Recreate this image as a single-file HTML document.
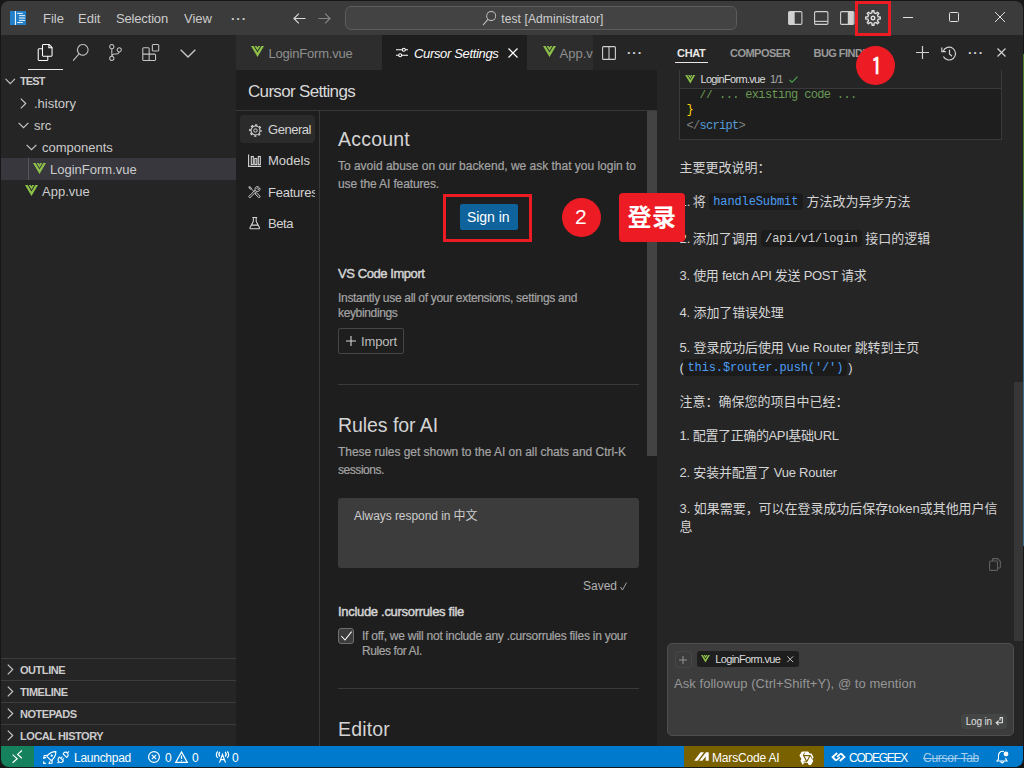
<!DOCTYPE html>
<html lang="en">
<head>
<meta charset="utf-8">
<title>Cursor Settings</title>
<style>
*{box-sizing:border-box;margin:0;padding:0}
html,body{width:1024px;height:768px;overflow:hidden;background:#1e1e1e}
body{font-family:"Liberation Sans","Noto Sans CJK SC",sans-serif;font-size:13px;color:#ccc;position:relative}
.abs{position:absolute}
.t{position:absolute;white-space:nowrap;line-height:1}
svg{position:absolute;overflow:visible}
#titlebar{left:0;top:0;width:1024px;height:35px;background:#3b3b3b}
#sidebar{left:0;top:35px;width:236px;height:711px;background:#252526}
#status{left:0;top:746px;width:1024px;height:22px;background:#007acc;color:#fff}
#tabs{left:236px;top:35px;width:421px;height:35px;background:#252526}
#editor{left:236px;top:70px;width:421px;height:676px;background:#1e1e1e}
#chat{left:657px;top:35px;width:367px;height:711px;background:#252526}
.menu{top:12px;font-size:13px;color:#ccc}
.row{position:absolute;left:0;width:236px;height:22px}
.pane{position:absolute;left:0;width:236px;height:22px;border-top:1px solid #3c3c3c}
.pane .t{left:20px;top:6px;font-size:11px;font-weight:bold;color:#ccc;letter-spacing:-0.45px}
.tree{font-size:13px;color:#ccc;top:5px}
.desc{font-size:12px;color:#a4a4a4;margin-top:0.7px;-webkit-text-stroke:0.2px #a4a4a4}
.h2{font-size:19.5px;color:#d4d4d4;margin-top:0.5px}
.h3{font-size:13px;font-weight:normal;-webkit-text-stroke:0.45px #d4d4d4;color:#d4d4d4}
.nav{font-size:13px;color:#d4d4d4;left:32px;margin-top:1.2px}
.cj{font-size:13px;color:#d4d4d4}
.mono{font-family:"Liberation Mono","DejaVu Sans Mono",monospace}
.code{font-family:"Liberation Mono","DejaVu Sans Mono",monospace;font-size:12px}
.ic{background:#1b1b1b;border-radius:3px;padding:2px 4px;font-family:"Liberation Mono","DejaVu Sans Mono",monospace;font-size:12px}
</style>
</head>
<body>

<!-- ================= TITLE BAR ================= -->
<div id="titlebar" class="abs">
  <svg style="left:10px;top:11px" width="16" height="14" viewBox="0 0 16 14">
    <rect x="0" y="0" width="16" height="14" fill="#2380c8"/>
    <rect x="4.900" y="0" width="1" height="14" fill="#fff"/>
    <rect x="7.200" y="1.900" width="5.600" height="0.900" fill="#fff"/>
    <rect x="9" y="4.100" width="6" height="1" fill="#e4eff8"/>
    <rect x="9" y="6" width="6" height="2" fill="#8fbde2"/>
    <rect x="9" y="8.900" width="6" height="1" fill="#e4eff8"/>
    <rect x="7.200" y="11.100" width="5.600" height="0.900" fill="#fff"/>
  </svg>
  <span class="t menu" style="left:43px">File</span>
  <span class="t menu" style="left:78px">Edit</span>
  <span class="t menu" style="left:116px;letter-spacing:-0.165px">Selection</span>
  <span class="t menu" style="left:184px">View</span>
  <span class="t menu" style="left:231px;letter-spacing:1px;font-weight:bold">···</span>
  <!-- nav arrows -->
  <svg style="left:292.500px;top:12.500px" width="13" height="11" viewBox="0 0 13 11" fill="none" stroke="#d8d8d8" stroke-width="1.200"><path d="M12.500 5.500 H1 M5.800 0.700 L1 5.500 L5.800 10.300"/></svg>
  <svg style="left:318px;top:12.500px" width="13" height="11" viewBox="0 0 13 11" fill="none" stroke="#858585" stroke-width="1.200"><path d="M0.500 5.500 H12 M7.200 0.700 L12 5.500 L7.200 10.300"/></svg>
  <!-- command center -->
  <div class="abs" style="left:345px;top:6px;width:392px;height:24px;background:#434343;border:1px solid #5c5c5c;border-radius:6px"></div>
  <svg style="left:482px;top:10.500px" width="14.500" height="14.500" viewBox="0 0 24 24" fill="#c8c8c8"><path d="M15.250 0a8.250 8.250 0 0 0-6.180 13.720L1 22.880l1.120 1 8.050-9.120A8.251 8.251 0 1 0 15.250.010V0zm0 15a6.750 6.750 0 1 1 0-13.500 6.750 6.750 0 0 1 0 13.500z"/></svg>
  <span class="t" style="left:501.250px;top:12.700px;font-size:12px;color:#d0d0d0;letter-spacing:0.111px">test [Administrator]</span>
  <!-- layout icons -->
  <svg style="left:788px;top:10.500px" width="14.500" height="14" viewBox="0 0 14.500 14" fill="none" stroke="#d0d0d0" stroke-width="1.100"><rect x="0.600" y="0.600" width="13.300" height="12.800" rx="1.200"/><rect x="1" y="1" width="5.700" height="12" fill="#d0d0d0" stroke="none"/></svg>
  <svg style="left:813.500px;top:10.500px" width="14.500" height="14" viewBox="0 0 14.500 14" fill="none" stroke="#d0d0d0" stroke-width="1.100"><rect x="0.600" y="0.600" width="13.300" height="12.800" rx="1.200"/><path d="M0.600 10.400 H13.900"/></svg>
  <svg style="left:839.500px;top:10.500px" width="14.500" height="14" viewBox="0 0 14.500 14" fill="none" stroke="#d0d0d0" stroke-width="1.100"><rect x="0.600" y="0.600" width="13.300" height="12.800" rx="1.200"/><rect x="7.800" y="1" width="5.700" height="12" fill="#d0d0d0" stroke="none"/></svg>
  <!-- gear -->
  <svg style="left:865px;top:10px" width="16" height="16" viewBox="0 0 16 16" fill="none" stroke="#e0e0e0" stroke-width="1.400" stroke-linejoin="round"><circle cx="8" cy="8" r="1.800"/><path d="M6.92 2.81 L7.04 0.76 L8.96 0.76 L9.08 2.81 L10.90 3.56 L12.44 2.20 L13.80 3.56 L12.44 5.10 L13.19 6.92 L15.24 7.04 L15.24 8.96 L13.19 9.08 L12.44 10.90 L13.80 12.44 L12.44 13.80 L10.90 12.44 L9.08 13.19 L8.96 15.24 L7.04 15.24 L6.92 13.19 L5.10 12.44 L3.56 13.80 L2.20 12.44 L3.56 10.90 L2.81 9.08 L0.76 8.96 L0.76 7.04 L2.81 6.92 L3.56 5.10 L2.20 3.56 L3.56 2.20 L5.10 3.56Z"/></svg>
  <!-- window controls -->
  <div class="abs" style="left:903px;top:17px;width:10px;height:1px;background:#e0e0e0"></div>
  <div class="abs" style="left:949px;top:12px;width:10px;height:10px;border:1px solid #e0e0e0;border-radius:1.500px"></div>
  <svg style="left:995px;top:12px" width="10" height="10" viewBox="0 0 10 10" stroke="#e0e0e0" stroke-width="1"><path d="M0 0 L10 10 M10 0 L0 10"/></svg>
</div>

<!-- ================= SIDEBAR ================= -->
<div id="sidebar" class="abs">
  <!-- activity icons (horizontal) -->
  <svg style="left:37px;top:9px" width="17" height="17" viewBox="0 0 24 24" fill="#fff"><path d="M17.5 0h-9L7 1.5V6H2.5L1 7.5v15.07L2.5 24h12.07L16 22.57V18h4.7l1.3-1.43V4.5L17.5 0zm0 2.12l2.38 2.38H17.5V2.12zm-3 20.38h-12v-15H7v9.07L8.5 18h6v4.5zm6-6h-12v-15H16V6h4.5v10.5z"/></svg>
  <svg style="left:72px;top:9px" width="17" height="17" viewBox="0 0 24 24" fill="#c5c5c5"><path d="M15.25 0a8.25 8.25 0 0 0-6.18 13.72L1 22.88l1.12 1 8.05-9.12A8.251 8.251 0 1 0 15.25.01V0zm0 15a6.75 6.75 0 1 1 0-13.5 6.75 6.75 0 0 1 0 13.5z"/></svg>
  <svg style="left:107px;top:9px" width="17" height="17" viewBox="0 0 24 24" fill="#c5c5c5"><path d="M21.007 8.222A3.738 3.738 0 0 0 15.045 5.2a3.737 3.737 0 0 0 1.156 6.583 2.988 2.988 0 0 1-2.668 1.67h-2.99a4.456 4.456 0 0 0-2.989 1.165V7.4a3.737 3.737 0 1 0-1.494 0v9.117a3.776 3.776 0 1 0 1.816.099 2.99 2.99 0 0 1 2.668-1.667h2.99a4.484 4.484 0 0 0 4.223-3.039 3.736 3.736 0 0 0 3.25-3.687zM4.565 3.738a2.242 2.242 0 1 1 4.484 0 2.242 2.242 0 0 1-4.484 0zm4.484 16.441a2.242 2.242 0 1 1-4.484 0 2.242 2.242 0 0 1 4.484 0zm8.221-9.715a2.242 2.242 0 1 1 0-4.485 2.242 2.242 0 0 1 0 4.485z"/></svg>
  <svg style="left:142px;top:9px" width="17.500" height="17" viewBox="0 0 24 24" fill="#c5c5c5"><path d="M13.5 1.5L15 0h7.5L24 1.5V9l-1.5 1.5H15L13.5 9V1.5zm1.500 0V9h7.500V1.500H15zM0 15V6l1.500-1.500H9L10.500 6v7.500H18l1.500 1.500v7.500L18 24H1.500L0 22.500V15zm9-1.500V6H1.500v7.500H9zM9 15H1.500v7.500H9V15zm1.500 7.500H18V15h-7.500v7.500z"/></svg>
  <svg style="left:180px;top:14px" width="16" height="9" viewBox="0 0 16 9" fill="none" stroke="#c5c5c5" stroke-width="1.4"><path d="M0.7 0.7 L8 8 L15.3 0.7"/></svg>
  <div class="abs" style="left:28px;top:34px;width:35px;height:1px;background:#e7e7e7"></div>

  <!-- explorer header -->
  <svg style="left:5.300px;top:42.500px" width="10.500" height="7" viewBox="0 0 11 7" fill="none" stroke="#c5c5c5" stroke-width="1.2"><path d="M0.6 0.8 L5.5 5.7 L10.4 0.8"/></svg>
  <span class="t" style="left:20px;top:41px;font-size:11px;font-weight:bold;color:#ccc;letter-spacing:-0.906px">TEST</span>

  <!-- tree -->
  <div class="row" style="top:57px">
    <svg style="left:20px;top:6px" width="7" height="11" viewBox="0 0 7 11" fill="none" stroke="#c5c5c5" stroke-width="1.2"><path d="M0.8 0.6 L5.7 5.5 L0.8 10.4"/></svg>
    <span class="t tree" style="left:34px">.history</span>
  </div>
  <div class="row" style="top:79px">
    <svg style="left:18px;top:8px" width="11" height="7" viewBox="0 0 11 7" fill="none" stroke="#c5c5c5" stroke-width="1.2"><path d="M0.6 0.8 L5.5 5.7 L10.4 0.8"/></svg>
    <span class="t tree" style="left:34px">src</span>
  </div>
  <div class="row" style="top:101px">
    <svg style="left:26px;top:8px" width="11" height="7" viewBox="0 0 11 7" fill="none" stroke="#c5c5c5" stroke-width="1.2"><path d="M0.6 0.8 L5.5 5.7 L10.4 0.8"/></svg>
    <span class="t tree" style="left:42px">components</span>
  </div>
  <div class="row" style="top:123px;background:#37373d">
    <div class="abs" style="left:28px;top:0;width:1px;height:22px;background:#585858"></div>
    <svg style="left:33px;top:5px" width="13" height="11" viewBox="0 0 13 11"><path d="M0 0H2.6L6.5 6.6 10.4 0H13L6.5 11Z" fill="#8dc149"/><path d="M3.7 0H5.6L6.5 1.6 7.4 0H9.3L6.5 4.8Z" fill="#8dc149"/></svg>
    <span class="t tree" style="left:50px">LoginForm.vue</span>
  </div>
  <div class="row" style="top:145px">
    <svg style="left:25px;top:5px" width="13" height="11" viewBox="0 0 13 11"><path d="M0 0H2.6L6.5 6.6 10.4 0H13L6.5 11Z" fill="#8dc149"/><path d="M3.7 0H5.6L6.5 1.6 7.4 0H9.3L6.5 4.800Z" fill="#8dc149"/></svg>
    <span class="t tree" style="left:42px">App.vue</span>
  </div>

  <!-- collapsed panes -->
  <div class="pane" style="top:623px"><svg style="left:7px;top:5px" width="7" height="11" viewBox="0 0 7 11" fill="none" stroke="#c5c5c5" stroke-width="1.2"><path d="M0.8 0.6 L5.7 5.5 L0.8 10.4"/></svg><span class="t">OUTLINE</span></div>
  <div class="pane" style="top:645px"><svg style="left:7px;top:5px" width="7" height="11" viewBox="0 0 7 11" fill="none" stroke="#c5c5c5" stroke-width="1.2"><path d="M0.8 0.6 L5.7 5.5 L0.8 10.4"/></svg><span class="t">TIMELINE</span></div>
  <div class="pane" style="top:667px"><svg style="left:7px;top:5px" width="7" height="11" viewBox="0 0 7 11" fill="none" stroke="#c5c5c5" stroke-width="1.2"><path d="M0.8 0.6 L5.7 5.5 L0.8 10.4"/></svg><span class="t">NOTEPADS</span></div>
  <div class="pane" style="top:689px"><svg style="left:7px;top:5px" width="7" height="11" viewBox="0 0 7 11" fill="none" stroke="#c5c5c5" stroke-width="1.2"><path d="M0.8 0.6 L5.7 5.5 L0.8 10.4"/></svg><span class="t">LOCAL HISTORY</span></div>
</div>

<!-- ================= TABS ================= -->
<div id="tabs" class="abs">
  <div class="abs" style="left:0;top:0;width:146px;height:35px;background:#2d2d2d">
    <svg style="left:15px;top:11px" width="13" height="11" viewBox="0 0 13 11"><path d="M0 0H2.600L6.500 6.600 10.400 0H13L6.500 11Z" fill="#8dc149"/><path d="M3.700 0H5.600L6.500 1.600 7.400 0H9.300L6.500 4.800Z" fill="#8dc149"/></svg>
    <span class="t" style="left:32.500px;top:12px;font-size:13px;color:#8f8f8f;letter-spacing:-0.209px">LoginForm.vue</span>
  </div>
  <div class="abs" style="left:146px;top:0;width:145px;height:35px;background:#1e1e1e">
    <svg style="left:14px;top:12px" width="12" height="11" viewBox="0 0 12 11" fill="none" stroke="#fff" stroke-width="1.100"><path d="M0 2.800 H6.300 M9.300 2.800 H12 M0 8.200 H2.700 M5.700 8.200 H12"/><circle cx="7.800" cy="2.800" r="1.500"/><circle cx="4.200" cy="8.200" r="1.500"/></svg>
    <span class="t" style="left:32px;top:12px;font-size:13px;color:#fff;font-style:italic;letter-spacing:-0.34px">Cursor Settings</span>
    <svg style="left:126px;top:13px" width="10" height="10" viewBox="0 0 10 10" fill="none" stroke="#fff" stroke-width="1.200"><path d="M0.500 0.500 L9.500 9.500 M9.500 0.500 L0.500 9.500"/></svg>
  </div>
  <div class="abs" style="left:291px;top:0;width:66px;height:35px;background:#2d2d2d;overflow:hidden">
    <svg style="left:16px;top:11px" width="13" height="11" viewBox="0 0 13 11"><path d="M0 0H2.600L6.500 6.600 10.400 0H13L6.500 11Z" fill="#8dc149"/><path d="M3.700 0H5.600L6.500 1.600 7.400 0H9.300L6.500 4.800Z" fill="#8dc149"/></svg>
    <span class="t" style="left:32.500px;top:12px;font-size:13px;color:#8f8f8f">App.vue</span>
  </div>
  <svg style="left:366px;top:11px" width="14" height="14" viewBox="0 0 14 14" fill="none" stroke="#d0d0d0" stroke-width="1.100"><rect x="0.600" y="0.600" width="12.800" height="12.800" rx="1"/><path d="M7 0.600 V13.400"/></svg>
  <span class="t" style="left:391px;top:11px;font-size:13px;color:#d0d0d0;letter-spacing:1px;font-weight:bold">···</span>
</div>

<!-- ================= EDITOR ================= -->
<div id="editor" class="abs">
  <span class="t" style="left:12px;top:13px;font-size:17px;color:#d8d8d8;letter-spacing:-0.678px">Cursor Settings</span>
  <div class="abs" style="left:0;top:40px;width:421px;height:1px;background:#383838"></div>
  <div class="abs" style="left:83px;top:41px;width:1px;height:635px;background:#383838"></div>
  <!-- scrollbar -->
  <div class="abs" style="left:411px;top:41px;width:10px;height:345px;background:#434343"></div>

  <!-- nav -->
  <div class="abs" style="left:0;top:41px;width:79px;height:635px;overflow:hidden">
    <div class="abs" style="left:4px;top:4px;width:75px;height:28px;background:#2b2b2b;border-radius:4px"></div>
    <svg style="left:12.500px;top:12.500px" width="13" height="13" viewBox="0 0 13 13" fill="none" stroke="#d4d4d4"><circle cx="6.500" cy="6.500" r="5.600" stroke-width="1.500" stroke-dasharray="2.200 2.198" stroke-dashoffset="1.100"/><circle cx="6.500" cy="6.500" r="4.500" stroke-width="1.100"/><circle cx="6.500" cy="6.500" r="1.700" stroke-width="1"/></svg>
    <span class="t nav" style="top:11px;letter-spacing:-0.464px">General</span>
    <svg style="left:12px;top:43px" width="13" height="13" viewBox="0 0 13 13" fill="none" stroke="#d4d4d4" stroke-width="1.100"><path d="M0.600 0.500 V12.400 H13"/><rect x="3.300" y="2.500" width="2" height="8"/><rect x="6.800" y="4.500" width="2" height="6"/><rect x="10.300" y="2.500" width="2" height="8"/></svg>
    <span class="t nav" style="top:42px;letter-spacing:0.013px">Models</span>
    <svg style="left:12.300px;top:74.800px" width="12.700" height="12.300" viewBox="0 0 13.200 13" fill="none" stroke="#d4d4d4" stroke-width="1" stroke-linejoin="round"><path d="M0.600 11.200 L7.500 4.300 L8.800 5.600 L1.900 12.500 Z"/><path d="M7.500 4.300 C6.500 1.700 9 -0.100 11.100 0.900 L9.400 2.600 L10.500 3.800 L12.300 2.100 C13.300 4.200 11.400 6.600 8.800 5.600"/><path d="M7.400 8.300 L8.700 7 L12.400 10.700 C13.100 11.600 11.900 12.800 11 12.100 Z"/><path d="M6.700 6.300 L3 2.600"/><path d="M0.900 0.700 L2.700 1.300 L3.500 2.700 L2.800 3.400 L1.400 2.600 Z"/></svg>
    <span class="t nav" style="top:74px;letter-spacing:-0.227px">Features</span>
    <svg style="left:13px;top:106px" width="11.500" height="12.400" viewBox="0 0 12 13" fill="none" stroke="#d4d4d4" stroke-width="1.100"><path d="M3.500 0.600 H8.500 M4.500 0.600 V4.500 L1 11.200 C0.800 11.900 1.200 12.400 1.800 12.400 H10.200 C10.800 12.400 11.200 11.900 11 11.200 L7.500 4.500 V0.600 M2.600 8.500 H9.400"/></svg>
    <span class="t nav" style="top:105px;letter-spacing:-0.438px">Beta</span>
  </div>

  <!-- Account -->
  <span class="t h2" style="left:102px;top:59px;letter-spacing:0.219px">Account</span>
  <span class="t desc" style="left:102px;top:89px;letter-spacing:-0.016px">To avoid abuse on our backend, we ask that you login to</span>
  <span class="t desc" style="left:102px;top:107px;letter-spacing:-0.12px">use the AI features.</span>
  <div class="abs" style="left:224px;top:134px;width:58px;height:26px;background:#0e639c;border-radius:2px"></div>
  <span class="t" style="left:231px;top:140px;font-size:14px;color:#fff;letter-spacing:-0.045px">Sign in</span>

  <!-- VS Code Import -->
  <span class="t h3" style="left:102px;top:197px;letter-spacing:-0.429px">VS Code Import</span>
  <span class="t desc" style="left:102px;top:221px;letter-spacing:-0.316px">Instantly use all of your extensions, settings and</span>
  <span class="t desc" style="left:102px;top:236px;letter-spacing:-0.352px">keybindings</span>
  <div class="abs" style="left:102px;top:258px;width:66px;height:26px;border:1px solid #454545;border-radius:2px"></div>
  <svg style="left:110px;top:266px" width="10" height="10" viewBox="0 0 10 10" stroke="#d4d4d4" stroke-width="1.100"><path d="M5 0 V10 M0 5 H10"/></svg>
  <span class="t" style="left:125px;top:265px;font-size:13px;color:#bbb;letter-spacing:-0.141px">Import</span>
  <div class="abs" style="left:102px;top:314px;width:301px;height:1px;background:#3a3a3a"></div>

  <!-- Rules for AI -->
  <span class="t h2" style="left:102px;top:345px;letter-spacing:-0.066px">Rules for AI</span>
  <span class="t desc" style="left:102px;top:375px;letter-spacing:-0.027px">These rules get shown to the AI on all chats and Ctrl-K</span>
  <span class="t desc" style="left:102px;top:393px;letter-spacing:-0.448px">sessions.</span>
  <div class="abs" style="left:102px;top:428px;width:301px;height:70px;background:#3c3c3c;border-radius:3px"></div>
  <span class="t" style="left:118px;top:440px;font-size:12px;color:#ccc;letter-spacing:-0.061px">Always respond in 中文</span>
  <span class="t" style="left:347px;top:510px;font-size:12px;color:#b0b0b0;letter-spacing:-0.006px">Saved</span>
  <svg style="left:384px;top:511.500px" width="7" height="9" viewBox="0 0 8 10" fill="none" stroke="#b0b0b0" stroke-width="1"><path d="M0.500 5.500 L2.800 9 L7.500 0.500"/></svg>

  <span class="t h3" style="left:102px;top:535px;letter-spacing:-0.307px">Include .cursorrules file</span>
  <div class="abs" style="left:102px;top:558px;width:16px;height:16px;background:#3c3c3c;border:1px solid #6e6e6e;border-radius:3px"></div>
  <svg style="left:105px;top:561px" width="11" height="10" viewBox="0 0 11 10" fill="none" stroke="#fff" stroke-width="1.050"><path d="M0.300 5 L4 9 L10.600 0.700"/></svg>
  <span class="t desc" style="left:126px;top:559px;letter-spacing:-0.245px">If off, we will not include any .cursorrules files in your</span>
  <span class="t desc" style="left:126px;top:574px;letter-spacing:-0.413px">Rules for AI.</span>
  <div class="abs" style="left:102px;top:618px;width:301px;height:1px;background:#3a3a3a"></div>

  <span class="t h2" style="left:102px;top:649px;letter-spacing:0.174px">Editor</span>
</div>

<!-- ================= CHAT ================= -->
<div id="chat" class="abs">
  <span class="t" style="left:20px;top:13px;font-size:11px;font-weight:bold;color:#e7e7e7;letter-spacing:-0.309px">CHAT</span>
  <div class="abs" style="left:18px;top:27px;width:33px;height:1px;background:#e7e7e7"></div>
  <span class="t" style="left:73px;top:13px;font-size:11px;font-weight:bold;color:#9a9a9a;letter-spacing:-0.523px">COMPOSER</span>
  <span class="t" style="left:156.500px;top:13px;font-size:11px;font-weight:bold;color:#9a9a9a;letter-spacing:-0.545px">BUG FINDER</span>
  <svg style="left:259px;top:11px" width="13" height="13" viewBox="0 0 13 13" stroke="#d0d0d0" stroke-width="1.200"><path d="M6.500 0 V13 M0 6.500 H13"/></svg>
  <svg style="left:284px;top:10.600px" width="16" height="15" viewBox="0 0 16 15" fill="none" stroke="#d0d0d0" stroke-width="1.200"><path d="M2.200 5.200 A6.400 6.400 0 1 1 2.400 10.400"/><path d="M0.800 1.600 V5.600 H4.800"/><path d="M8.500 3.800 V8 L11 10.200"/></svg>
  <span class="t" style="left:311px;top:11.200px;font-size:13px;color:#d0d0d0;letter-spacing:1px;font-weight:bold">···</span>
  <svg style="left:339.500px;top:13px" width="9" height="9" viewBox="0 0 9 9" stroke="#d0d0d0" stroke-width="1.200"><path d="M0.500 0.500 L8.500 8.500 M8.500 0.500 L0.500 8.500"/></svg>
  <div class="abs" style="left:22px;top:35px;width:323px;height:70px;border:1px solid #3a3a3a;border-top:none;background:#1e1e1e"></div>
  <div class="abs" style="left:23px;top:35px;width:321px;height:19px;background:#252526;border-bottom:1px solid #3a3a3a"></div>
  <svg style="left:28px;top:40px" width="10.500" height="8.500" viewBox="0 0 13 11"><path d="M0 0H2.600L6.500 6.600 10.400 0H13L6.500 11Z" fill="#8dc149"/><path d="M3.700 0H5.600L6.500 1.600 7.400 0H9.300L6.500 4.800Z" fill="#8dc149"/></svg>
  <span class="t" style="left:43.500px;top:39.400px;font-size:11px;color:#ddd;letter-spacing:-0.683px">LoginForm.vue</span>
  <span class="t" style="left:113px;top:39px;font-size:11px;color:#aaa;letter-spacing:-0.932px">1/1</span>
  <svg style="left:131.500px;top:41px" width="9" height="7" viewBox="0 0 9 7" fill="none" stroke="#4caf50" stroke-width="1.100"><path d="M0.500 3.800 L3 6.300 L8.500 0.600"/></svg>
  <div class="abs" style="left:23px;top:55px;width:321px;height:49px;overflow:hidden">
  <span class="t code" style="left:19.500px;top:-1.500px;color:#6a9955;letter-spacing:-0.66px">// ... existing code ...</span>
  <span class="t code" style="left:6.500px;top:14px;color:#ffd700">}</span>
  <span class="t code" style="left:6.500px;top:30px;color:#808080;letter-spacing:-0.703px">&lt;/<span style="color:#569cd6">script</span>&gt;</span>
  </div>
  <span class="t cj" style="left:22.5px;top:126.0px">主要更改说明：</span>
  <span class="t cj" style="left:22.5px;top:160.25px">1.</span>
  <span class="t cj" style="left:35.75px;top:160.25px">将</span>
  <div class="abs" style="left:52px;top:158px;width:94px;height:17px;background:#1b1b1b;border-radius:4px"></div>
  <span class="t mono" style="left:56.25px;top:161px;font-size:12px;color:#4c9df3;letter-spacing:-0.118px">handleSubmit</span>
  <span class="t cj" style="left:149.5px;top:160.25px">方法改为异步方法</span>
  <span class="t cj" style="left:22.5px;top:197.25px">2.</span>
  <span class="t cj" style="left:35.75px;top:197.25px">添加了调用</span>
  <div class="abs" style="left:104.25px;top:195px;width:100.500px;height:17px;background:#1b1b1b;border-radius:4px"></div>
  <span class="t mono" style="left:108px;top:198px;font-size:12px;color:#d4d4d4;letter-spacing:-0.067px">/api/v1/login</span>
  <span class="t cj" style="left:208.25px;top:197.25px">接口的逻辑</span>
  <span class="t cj" style="left:22.5px;top:234.25px;letter-spacing:-0.273px">3. 使用 fetch API 发送 POST 请求</span>
  <span class="t cj" style="left:22.5px;top:270.75px;letter-spacing:-0.122px">4. 添加了错误处理</span>
  <span class="t cj" style="left:22.5px;top:306.25px;letter-spacing:-0.128px">5. 登录成功后使用 Vue Router 跳转到主页</span>
  <span class="t cj" style="left:22.5px;top:325.75px">(</span>
  <div class="abs" style="left:26.25px;top:323.5px;width:164px;height:17px;background:#1b1b1b;border-radius:4px"></div>
  <span class="t mono" style="left:30.5px;top:326.5px;font-size:12px;color:#4c9df3;letter-spacing:-0.122px">this.$router.push('/')</span>
  <span class="t cj" style="left:191.25px;top:325.75px">)</span>
  <span class="t cj" style="left:22.5px;top:360.0px">注意：确保您的项目中已经：</span>
  <span class="t cj" style="left:22.5px;top:394.0px;letter-spacing:-0.378px">1. 配置了正确的API基础URL</span>
  <span class="t cj" style="left:22.5px;top:430.5px;letter-spacing:-0.193px">2. 安装并配置了 Vue Router</span>
  <span class="t cj" style="left:22.5px;top:466.5px;letter-spacing:-0.044px">3. 如果需要，可以在登录成功后保存token或其他用户信</span>
  <span class="t cj" style="left:22.5px;top:484.5px">息</span>
  <svg style="left:332px;top:523px" width="12" height="13" viewBox="0 0 12 13" fill="none" stroke="#606060" stroke-width="1.100"><path d="M3.500 3 V1.500 Q3.500 0.600 4.400 0.600 H8.500 L11.400 3.500 V9.100 Q11.400 10 10.500 10 H8.500"/><rect x="0.600" y="3" width="7.900" height="9.400" rx="1"/></svg>
  <div class="abs" style="left:357px;top:347px;width:9px;height:259px;background:#363636"></div>
  <div class="abs" style="left:10px;top:608px;width:347px;height:93px;background:#3c3c3c;border:1px solid #4e4e4e;border-radius:5px"></div>
  <div class="abs" style="left:17.500px;top:616px;width:17px;height:16.500px;border:1px solid #474747;border-radius:3px"></div>
  <svg style="left:22px;top:620.500px" width="8" height="8" viewBox="0 0 8 8" stroke="#a8a8a8" stroke-width="0.800"><path d="M4 0 V8 M0 4 H8"/></svg>
  <div class="abs" style="left:40px;top:616px;width:101.500px;height:16px;background:#1e1e1e;border-radius:3px"></div>
  <svg style="left:44px;top:620px" width="9" height="7.500" viewBox="0 0 13 11"><path d="M0 0H2.600L6.500 6.600 10.400 0H13L6.500 11Z" fill="#8dc149"/><path d="M3.700 0H5.600L6.500 1.600 7.400 0H9.300L6.500 4.800Z" fill="#8dc149"/></svg>
  <span class="t" style="left:58.250px;top:619px;font-size:11px;color:#ddd;letter-spacing:-0.644px">LoginForm.vue</span>
  <svg style="left:129.500px;top:621px" width="6.500" height="6.500" viewBox="0 0 7 7" stroke="#ccc" stroke-width="1"><path d="M0.400 0.400 L6.600 6.600 M6.600 0.400 L0.400 6.600"/></svg>
  <span class="t" style="left:17px;top:642px;font-size:13px;color:#969696;letter-spacing:0.047px">Ask followup (Ctrl+Shift+Y), @ to mention</span>
  <div class="abs" style="left:304.200px;top:679px;width:45.700px;height:15px;background:#444645;border-radius:4px"></div>
  <span class="t" style="left:308.700px;top:682px;font-size:10px;color:#e0e0e0;letter-spacing:-0.158px">Log in</span>
  <svg style="left:338.200px;top:682px" width="8" height="8.500" viewBox="0 0 8 8.500" fill="none" stroke="#e0e0e0" stroke-width="1.100"><path d="M5 0.600 H7.400 V5.800 H1.600 M3.600 3.600 L1.200 5.800 L3.600 8 M5 0.600 V3.400"/></svg>
  </div>

<!-- ================= STATUS BAR ================= -->
<div id="status" class="abs">
  <div class="abs" style="left:0;top:0;width:34px;height:22px;background:#16825d"></div>
  <svg style="left:12px;top:4px" width="10.500" height="13" viewBox="0 0 10.500 13" fill="none" stroke="#fff" stroke-width="1.150"><path d="M0.600 4.600 L5.200 8.700 L0.600 12.700"/><path d="M9.900 0.500 L5.600 4.400 L9.900 8.300"/></svg>
  <!-- rocket -->
  <svg style="left:42.500px;top:4.500px" width="13.500" height="13" viewBox="0 0 13.500 13" fill="none" stroke="#fff" stroke-width="1.150" stroke-linejoin="round"><path d="M12.900 0.600 C9 0.600 5.600 2.800 3.900 5.300 L8.200 9.600 C10.600 7.900 12.900 4.600 12.900 0.600Z"/><path d="M4.800 4.200 L1.200 4.500 L0.700 7.400 L3.200 6.300"/><path d="M9.200 8.700 L9 12.200 L6 12.500 L7.200 10.200"/><circle cx="8.700" cy="4.700" r="1.150" fill="#fff" stroke="none"/><path d="M0.700 10.200 V12.400 H2.900" /></svg>
  <!-- plug -->
  <svg style="left:57px;top:5px" width="12.500" height="12.500" viewBox="0 0 13 13" fill="none" stroke="#fff" stroke-width="1.150" stroke-linejoin="round"><path d="M6.300 3 L10 6.700 C12 5.500 12 3.100 10.700 1.900 C9.500 0.700 7.400 0.900 6.300 3Z"/><path d="M10.900 1.800 L12.500 0.400"/><path d="M2.700 6.300 L6.700 10.300 C5.400 12.300 3.100 12.300 1.900 11.100 C0.700 9.900 0.800 7.700 2.700 6.300Z"/><path d="M1.800 11.200 L0.400 12.600"/><path d="M4.400 7.100 L5.600 5.900 M6.100 8.800 L7.300 7.600"/></svg>
  <span class="t" style="left:74px;top:5.700px;font-size:12px;letter-spacing:-0.266px">Launchpad</span>
  <!-- error -->
  <svg style="left:148px;top:5px" width="12" height="12" viewBox="0 0 12 12" fill="none" stroke="#fff" stroke-width="1.200"><circle cx="6" cy="6" r="5.400"/><path d="M3.800 3.800 L8.200 8.200 M8.200 3.800 L3.800 8.200"/></svg>
  <span class="t" style="left:165px;top:5.700px;font-size:12px">0</span>
  <svg style="left:175px;top:5px" width="13" height="12" viewBox="0 0 13 12" fill="none" stroke="#fff" stroke-width="1.200"><path d="M6.500 0.900 L12.300 11.400 H0.700Z"/><path d="M6.500 4.500 V8 M6.500 9.200 V10.200"/></svg>
  <span class="t" style="left:192px;top:5.700px;font-size:12px">0</span>
  <!-- radio tower -->
  <svg style="left:216px;top:5px" width="13" height="12" viewBox="0 0 13 12" fill="none" stroke="#fff" stroke-width="1.200"><path d="M3.500 11.600 L6.500 3.500 L9.500 11.600 M4.600 8.600 H8.400"/><path d="M3.800 0.800 C2.700 2.200 2.700 4.300 3.800 5.700 M9.200 0.800 C10.300 2.200 10.300 4.300 9.200 5.700"/><path d="M1.700 0.300 C0.100 2.300 0.100 5 1.700 7 M11.300 0.300 C12.900 2.300 12.900 5 11.300 7"/></svg>
  <span class="t" style="left:232px;top:5.700px;font-size:12px">0</span>

  <!-- right side -->
  <div class="abs" style="left:684px;top:0;width:140px;height:22px;background:#7a6100"></div>
  <svg style="left:693.500px;top:6.250px" width="15" height="9" viewBox="0 0 15 9" fill="#fff"><path d="M0.200 8.800 L6.600 0.200 H10 L3.600 8.800 Z"/><path d="M5.300 8.800 L12 0.200 H14.700 V8.800 H11.700 V4.400 L8.300 8.800 Z"/></svg>
  <span class="t" style="left:712px;top:5.700px;font-size:12px;letter-spacing:-0.17px">MarsCode AI</span>
  <svg style="left:799px;top:4.500px" width="15" height="14.500" viewBox="0 0 15 14.500"><path d="M4.300 0.500 H9.200 L10.500 2.600 H12.600 L14.600 6.200 L13.400 8.200 L14.300 9.900 L12 13.900 H9.800 L8.700 12.100 H5 L3.800 14 L1.400 9.800 L2.500 7.900 L0.400 4.400 L2.600 0.800 Z" fill="#fff"/><path d="M4.600 4.600 H11.200 L7.700 10.600 Z" fill="none" stroke="#7a6100" stroke-width="1.100"/><path d="M5.800 1.600 L4.300 4.400 M11.600 5 L13.200 7.800 M7.400 10.900 L4.600 10.800" stroke="#7a6100" stroke-width="0.900" fill="none"/></svg>
  <svg style="left:831px;top:6px" width="15" height="10" viewBox="0 0 15 10" fill="none" stroke="#fff" stroke-width="1.900" stroke-linejoin="miter"><path d="M6.200 1 L1.600 5 L5 8.600"/><path d="M8.800 9 L13.400 5 L10 1.400"/><path d="M5 8.600 L9 5.200 M10 1.400 L6 4.800" stroke-width="1.700"/></svg>
  <span class="t" style="left:849px;top:5.700px;font-size:12px;letter-spacing:-1.252px">CODEGEEX</span>
  <span class="t" style="left:923px;top:5.700px;font-size:12px;color:#a5cdec;text-decoration:line-through;letter-spacing:-0.248px">Cursor Tab</span>
  <svg style="left:996px;top:4px" width="13" height="14" viewBox="0 0 13 14" fill="none" stroke="#fff" stroke-width="1.100"><path d="M8 1.500 C4.500 0.600 2.500 3 2.500 5.500 V9 L1 11 H11 L9.800 9 V8"/><path d="M4.800 11.200 C4.800 13.400 7.600 13.400 7.600 11.200"/><circle cx="10" cy="4" r="2.400" fill="#fff" stroke="none"/></svg>
</div>

<!-- ================= ANNOTATIONS ================= -->
<div id="anno">
  <div class="abs" style="left:855px;top:1px;width:36px;height:35px;border:3px solid #ed1c24"></div>
  <div class="abs" style="left:856px;top:46px;width:39px;height:39px;border-radius:50%;background:#ed1c24"></div>
  <span class="t" style="left:871px;top:54.700px;font-size:23px;color:#fff;font-family:'IPAGothic','Liberation Sans',sans-serif;-webkit-text-stroke:0.5px #fff">1</span>
  <div class="abs" style="left:443px;top:194px;width:89px;height:47.500px;border:3px solid #ed1c24"></div>
  <div class="abs" style="left:562px;top:198px;width:39px;height:39px;border-radius:50%;background:#ed1c24"></div>
  <span class="t" style="left:575px;top:206px;font-size:21px;color:#fff">2</span>
  <div class="abs" style="left:619px;top:193px;width:66px;height:49px;border-radius:4px;background:#ed1c24"></div>
  <span class="t" style="left:627.500px;top:206px;font-size:24px;font-weight:bold;color:#fff;font-family:'Liberation Sans','Noto Sans CJK SC',sans-serif;letter-spacing:0.5px">登录</span>
</div>

<div class="abs" style="left:1px;top:1px;width:1022px;height:765.500px;border-radius:8px;box-shadow:0 0 0 20px #171717;pointer-events:none"></div>
<div class="abs" style="left:1023px;top:54px;width:1px;height:492px;background:linear-gradient(#4a7a2e 0,#4a7a2e 30%,#3c6c8a 36%,#3c6c8a 100%)"></div>
</body>
</html>
